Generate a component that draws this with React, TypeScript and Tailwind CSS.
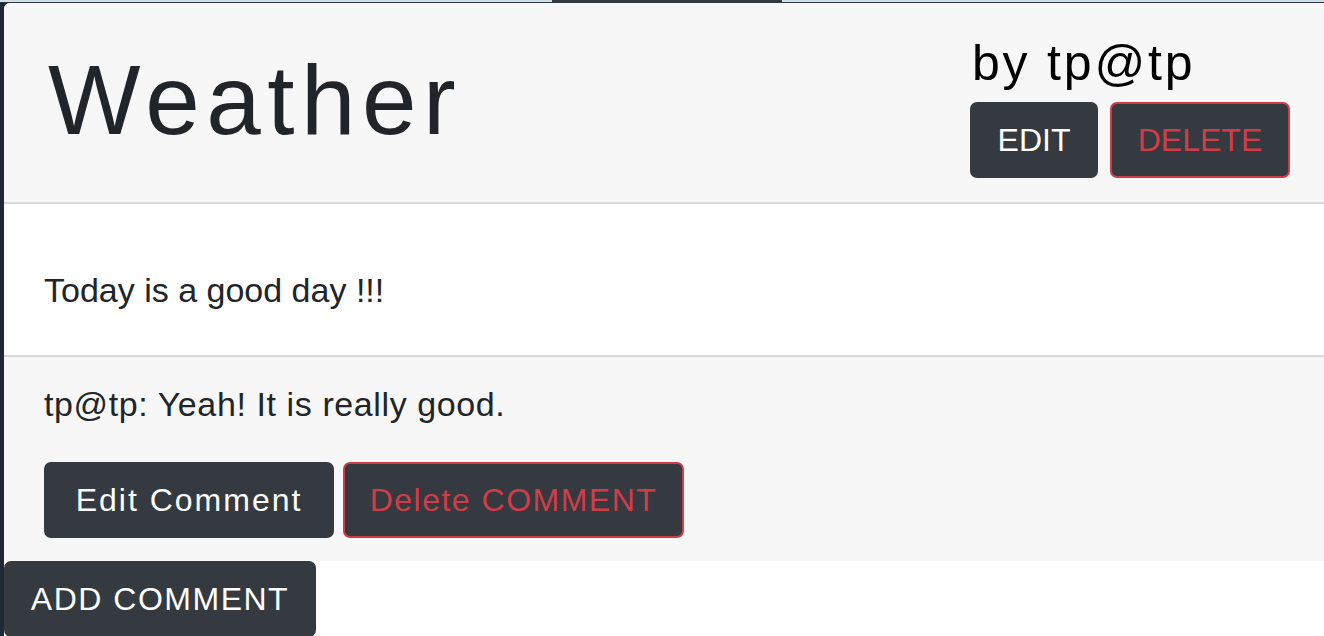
const FONT = { fontFamily: '"Liberation Sans", Arial, sans-serif' };

function DarkButton({ label, width, danger }: { label: string; width: string; danger?: boolean }) {
  return (
    <button
      type="button"
      className={
        danger
          ? `flex h-[76px] ${width} items-center justify-center rounded-[7px] border-2 border-[#d03d48] bg-[#343a40] text-[32px] leading-none text-[#d03d48]`
          : `flex h-[76px] ${width} items-center justify-center rounded-[7px] border-2 border-[#343a40] bg-[#343a40] text-[32px] leading-none text-white`
      }
    >
      {label}
    </button>
  );
}

export default function App() {
  return (
    <div className="h-[636px] w-[1324px] overflow-hidden bg-[#1f2931]" style={FONT}>
      {/* browser chrome sliver */}
      <div className="flex h-[2px] bg-[#cfe0e9]">
        <div className="ml-[552px] h-[2px] w-[230px] bg-[#343a40]" />
      </div>
      <div className="h-px bg-[#2f3a43]" />

      <div className="flex">
        <div className="w-[4px] shrink-0 bg-[#1f2931]" />
        <div className="h-[633px] w-[1326px] shrink-0 rounded-tl-[6px] bg-white">
          <section className="overflow-hidden rounded-tl-[6px]">
            <header className="flex h-[201px] items-start justify-between border-b-2 border-[#d9d9d9] bg-[#f7f7f7] px-[40px]">
              <h1 className="mt-[48px] pl-[4px] text-[98px] leading-none tracking-[6.5px] text-[#212529]">Weather</h1>
              <div className="mt-[35px] flex flex-col">
                <p className="pl-[2px] text-[50px] leading-none tracking-[2.8px] text-black">by tp@tp</p>
                <div className="mt-[14px] flex gap-[12px]">
                  <DarkButton label="EDIT" width="w-[128px]" />
                  <DarkButton label="DELETE" width="w-[180px]" danger />
                </div>
              </div>
            </header>

            <div className="h-[153px] border-b-2 border-[#d9d9d9] bg-white px-[40px] pt-[69px]">
              <p className="text-[34px] leading-none text-[#212529]">Today is a good day !!!</p>
            </div>

            <div className="h-[204px] bg-[#f7f7f7] px-[40px] pt-[30px]">
              <p className="text-[34px] leading-none tracking-[0.6px] text-[#212529]">tp@tp: Yeah! It is really good.</p>
              <div className="mt-[41px] flex gap-[9px]">
                <DarkButton label="Edit Comment" width="w-[290px] tracking-[2px]" />
                <DarkButton label="Delete COMMENT" width="w-[341px] tracking-[1.5px]" danger />
              </div>
            </div>
          </section>

          <div className="flex">
            <button
              type="button"
              className="flex h-[76px] w-[312px] items-center justify-center rounded-[7px] bg-[#343a40] text-[32px] leading-none tracking-[1.5px] text-white"
            >
              ADD COMMENT
            </button>
          </div>
        </div>
      </div>
    </div>
  );
}
